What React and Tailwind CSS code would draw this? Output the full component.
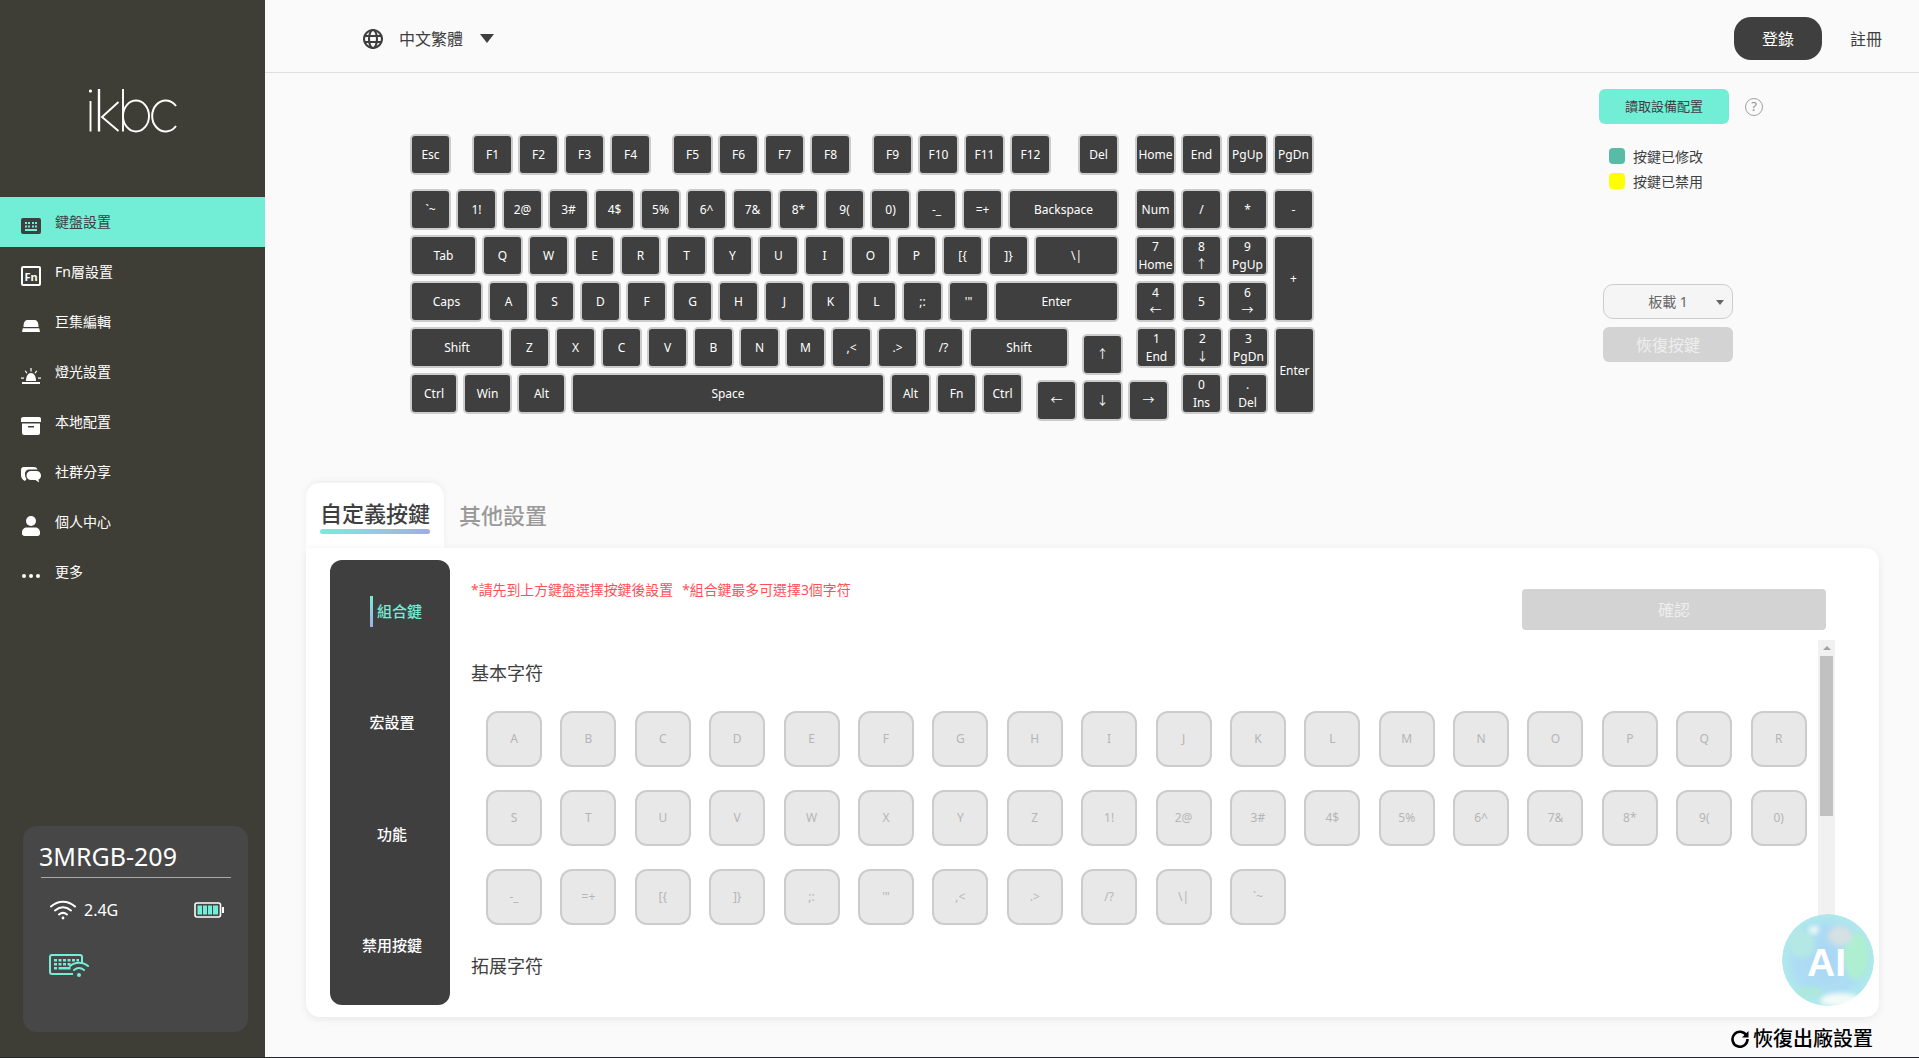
import React from 'react';

const FONT = "font-['Noto_Sans','Noto_Sans_CJK_TC',sans-serif]";

// keyboard layout, every key is 41px unless w says otherwise
const KEY_ROWS = [
  {
    cls: 'mt-px mb-[14px]',
    keys: [
      { t: 'Esc' },
      { t: 'F1', x: 'ml-[16px]' }, { t: 'F2' }, { t: 'F3' }, { t: 'F4' },
      { t: 'F5', x: 'ml-[16px]' }, { t: 'F6' }, { t: 'F7' }, { t: 'F8' },
      { t: 'F9', x: 'ml-[16px]' }, { t: 'F10' }, { t: 'F11' }, { t: 'F12' },
      { t: 'Del', x: 'ml-[22px]' },
      { t: 'Home', x: 'ml-[11px]' }, { t: 'End' }, { t: 'PgUp' }, { t: 'PgDn' },
    ],
  },
  {
    cls: 'mb-[5px]',
    keys: [
      { t: '`~' }, { t: '1!' }, { t: '2@' }, { t: '3#' }, { t: '4$' }, { t: '5%' }, { t: '6^' },
      { t: '7&' }, { t: '8*' }, { t: '9(' }, { t: '0)' }, { t: '-_' }, { t: '=+' },
      { t: 'Backspace', w: 'w-[111px]' },
      { t: 'Num', x: 'ml-[11px]' }, { t: '/' }, { t: '*' }, { t: '-' },
    ],
  },
  {
    cls: 'mb-[5px]',
    keys: [
      { t: 'Tab', w: 'w-[67px]' }, { t: 'Q' }, { t: 'W' }, { t: 'E' }, { t: 'R' }, { t: 'T' }, { t: 'Y' },
      { t: 'U' }, { t: 'I' }, { t: 'O' }, { t: 'P' }, { t: '[{' }, { t: ']}' },
      { t: '\\|', w: 'w-[85px]' },
      { t: ['7', 'Home'], x: 'ml-[11px]' }, { t: ['8', '↑'] }, { t: ['9', 'PgUp'] },
      { t: '+', h: 'h-[87px]' },
    ],
  },
  {
    cls: 'mb-[5px]',
    keys: [
      { t: 'Caps', w: 'w-[73px]' }, { t: 'A' }, { t: 'S' }, { t: 'D' }, { t: 'F' }, { t: 'G' }, { t: 'H' },
      { t: 'J' }, { t: 'K' }, { t: 'L' }, { t: ';:' }, { t: '\'"' },
      { t: 'Enter', w: 'w-[125px]' },
      { t: ['4', '←'], x: 'ml-[11px]' }, { t: '5' }, { t: ['6', '→'] },
    ],
  },
  {
    cls: 'mb-[5px]',
    keys: [
      { t: 'Shift', w: 'w-[94px]' }, { t: 'Z' }, { t: 'X' }, { t: 'C' }, { t: 'V' }, { t: 'B' }, { t: 'N' },
      { t: 'M' }, { t: ',<' }, { t: '.>' }, { t: '/?' },
      { t: 'Shift', w: 'w-[100px]' },
      { t: '↑', x: 'ml-[8px] mt-[7px]' },
      { t: ['1', 'End'], x: 'ml-[8px]' }, { t: ['2', '↓'] }, { t: ['3', 'PgDn'] },
      { t: 'Enter', h: 'h-[87px]' },
    ],
  },
  {
    cls: '',
    keys: [
      { t: 'Ctrl', w: 'w-[48px]' }, { t: 'Win', w: 'w-[49px]' }, { t: 'Alt', w: 'w-[49px]' },
      { t: 'Space', w: 'w-[314px]' },
      { t: 'Alt' }, { t: 'Fn' }, { t: 'Ctrl' },
      { t: '←', x: 'ml-[8px] mt-[7px]' }, { t: '↓', x: 'mt-[7px]' }, { t: '→', x: 'mt-[7px]' },
      { t: ['0', 'Ins'], x: 'ml-[7px]' }, { t: ['.', 'Del'] },
    ],
  },
];

const BASIC_KEYS = [
  'A', 'B', 'C', 'D', 'E', 'F', 'G', 'H', 'I', 'J', 'K', 'L', 'M', 'N', 'O', 'P', 'Q', 'R',
  'S', 'T', 'U', 'V', 'W', 'X', 'Y', 'Z', '1!', '2@', '3#', '4$', '5%', '6^', '7&', '8*', '9(', '0)',
  '-_', '=+', '[{', ']}', ';:', '\'"', ',<', '.>', '/?', '\\|', '`~',
];

const KeyboardIcon = () => (
  <svg width="20" height="16" viewBox="0 0 20 16">
    <rect width="20" height="16" rx="2" fill="#3f3f3f" />
    <g fill="#72eed7">
      <rect x="4" y="4" width="2" height="2" /><rect x="7" y="4" width="2" height="2" /><rect x="11" y="4" width="2" height="2" /><rect x="14" y="4" width="2" height="2" />
      <rect x="4" y="7.5" width="2" height="2" /><rect x="7" y="7.5" width="2" height="2" /><rect x="11" y="7.5" width="2" height="2" /><rect x="14" y="7.5" width="2" height="2" />
      <rect x="4" y="11" width="12" height="2" />
    </g>
  </svg>
);

const FnIcon = () => (
  <span className="flex h-[20px] w-[20px] items-center justify-center rounded-[2px] border-2 border-white text-[11px] font-bold leading-none text-white">Fn</span>
);

const MacroIcon = () => (
  <svg width="18" height="12" viewBox="0 0 18 12" fill="#fff">
    <path d="M1.5 7 C1.5 2 3 0 5.5 0 H12.5 C15 0 16.5 2 16.5 7 Z" />
    <path d="M0.8 8.2 H17.2 L18 12 H0 Z" />
  </svg>
);

const LightIcon = () => (
  <svg width="20" height="16" viewBox="0 0 20 16" fill="#fff">
    <path d="M5 13 C5 8 7 5 10 5 C13 5 15 8 15 13 Z" />
    <rect x="1" y="14" width="18" height="2" />
    <rect x="9.4" y="0" width="1.2" height="3.5" />
    <path d="M3.8 3 L4.8 2.4 L6.4 5 L5.4 5.6 Z M16.2 3 L15.2 2.4 L13.6 5 L14.6 5.6 Z" />
    <rect x="0" y="9.5" width="3" height="1.2" /><rect x="17" y="9.5" width="3" height="1.2" />
  </svg>
);

const ArchiveIcon = () => (
  <svg width="20" height="18" viewBox="0 0 20 18" fill="#fff">
    <path d="M2 0 H18 A2 2 0 0 1 20 2 V5 H0 V2 A2 2 0 0 1 2 0 Z" />
    <path fillRule="evenodd" d="M1 6.5 H19 V16 A2 2 0 0 1 17 18 H3 A2 2 0 0 1 1 16 Z M7 9 V10.5 H13 V9 Z" />
  </svg>
);

const ChatIcon = () => (
  <svg width="20" height="18" viewBox="0 0 20 18" fill="#fff">
    <path d="M3 0 H13 C15 0 16 1 16.5 2.5 H9 C5.5 2.5 4 4.5 4 7 C4 9 4.5 10.5 5.5 12 L4 14 C1.5 13 0 11 0 8 V3 C0 1 1 0 3 0 Z" />
    <path d="M10 4 H15.5 C18 4 20 6 20 8.5 C20 10.5 19 12 17.5 12.5 L18 15.5 L14.5 13 H10 C7.5 13 5.5 11 5.5 8.5 C5.5 6 7.5 4 10 4 Z" />
  </svg>
);

const UserIcon = () => (
  <svg width="18" height="20" viewBox="0 0 18 20" fill="#fff">
    <circle cx="9" cy="5" r="5" />
    <path d="M5 11.5 H13 C16 11.5 18 13.5 18 16.5 V17.5 C18 19 17 20 15.5 20 H2.5 C1 20 0 19 0 17.5 V16.5 C0 13.5 2 11.5 5 11.5 Z" />
  </svg>
);

const DotsIcon = () => (
  <svg width="18" height="4" viewBox="0 0 18 4" fill="#fff">
    <circle cx="2" cy="2" r="2" /><circle cx="9" cy="2" r="2" /><circle cx="16" cy="2" r="2" />
  </svg>
);

const NAV_ITEMS = [
  { label: '鍵盤設置', icon: <KeyboardIcon />, active: true },
  { label: 'Fn層設置', icon: <FnIcon /> },
  { label: '巨集編輯', icon: <MacroIcon /> },
  { label: '燈光設置', icon: <LightIcon /> },
  { label: '本地配置', icon: <ArchiveIcon /> },
  { label: '社群分享', icon: <ChatIcon /> },
  { label: '個人中心', icon: <UserIcon /> },
  { label: '更多', icon: <DotsIcon /> },
];

const Logo = () => (
  <svg width="90" height="46" viewBox="0 0 90 46" fill="none" stroke="#fff" strokeWidth="1.9">
    <circle cx="1.5" cy="3" r="1.6" fill="#fff" stroke="none" />
    <path d="M1.5 13 V43.5" />
    <path d="M10 1 V43.5" strokeWidth="2.4" />
    <path d="M29.5 14 L13 29 L29.5 43" />
    <path d="M34 1 V43.5" />
    <ellipse cx="47" cy="28" rx="13" ry="15.5" />
    <path d="M87 18 A13.5 15.5 0 1 0 87 38" strokeWidth="2" />
  </svg>
);

const Key = ({ k }) => (
  <div className={`flex flex-none flex-col items-center justify-center rounded-[5px] border-2 border-[#cccccc] bg-[#3f3f3f] text-[12px] leading-[18px] text-white whitespace-nowrap ${k.w || 'w-[41px]'} ${k.h || 'h-[41px]'} ${k.x || ''}`}>
    {Array.isArray(k.t) ? k.t.map((line) => <span key={line}>{line}</span>) : k.t}
  </div>
);

const Sidebar = () => (
  <aside className="flex h-full w-[265px] flex-none flex-col bg-[#3f3e36]">
    <div className="flex h-[197px] flex-none justify-center pl-[2px] pt-[88px]">
      <div><Logo /></div>
    </div>
    <nav className="flex flex-col">
      {NAV_ITEMS.map((item) => (
        <div key={item.label} className={`flex h-[50px] items-start ${item.active ? 'bg-[#72eed7] text-[#3f3f3f]' : 'text-white'}`}>
          <span className="ml-[21px] flex h-[50px] w-[20px] flex-none items-center justify-center pt-[8px]">{item.icon}</span>
          <span className="ml-[14px] mt-[15px] text-[14px] leading-[20px]">{item.label}</span>
        </div>
      ))}
    </nav>
    <div className="ml-[23px] mt-[229px] h-[206px] w-[225px] rounded-[14px] bg-[#474747] pl-[16px] pt-[13px] text-white">
      <div className="text-[25px] leading-[34px]">3MRGB-209</div>
      <div className="ml-[2px] mt-[4px] h-px w-[190px] bg-[#aaaaaa]" />
      <div className="mt-[20px] flex h-[24px] items-center pl-[11px]">
        <svg width="26" height="20" viewBox="0 0 26 20" fill="none" stroke="#fff" strokeWidth="2" strokeLinecap="round">
          <path d="M1 6.5 C8 0 18 0 25 6.5" />
          <path d="M5 10.5 C10 6.5 16 6.5 21 10.5" />
          <path d="M9 14.5 C11.5 12.5 14.5 12.5 17 14.5" />
          <circle cx="13" cy="18" r="1.4" fill="#fff" stroke="none" />
        </svg>
        <span className="ml-[8px] text-[16px]">2.4G</span>
        <svg className="ml-[76px]" width="30" height="16" viewBox="0 0 30 16">
          <rect x="1" y="1" width="25.5" height="14" rx="2" fill="none" stroke="#fff" strokeWidth="1.6" />
          <rect x="3.5" y="3.5" width="4.5" height="9" fill="#72eed7" />
          <rect x="9" y="3.5" width="4" height="9" fill="#72eed7" />
          <rect x="14" y="3.5" width="4" height="9" fill="#72eed7" />
          <rect x="19" y="3.5" width="5" height="9" fill="#72eed7" />
          <rect x="28" y="5" width="2" height="6" fill="#fff" />
        </svg>
      </div>
      <svg className="ml-[10px] mt-[32px]" width="40" height="24" viewBox="0 0 40 24" fill="none">
        <path d="M24 20 H3 A2 2 0 0 1 1 18 V3 A2 2 0 0 1 3 1 H31 A2 2 0 0 1 33 3 V9" stroke="#72eed7" strokeWidth="2" />
        <g fill="#72eed7">
          <rect x="5" y="5" width="3" height="2.5" /><rect x="9.5" y="5" width="3" height="2.5" /><rect x="14" y="5" width="3" height="2.5" /><rect x="18.5" y="5" width="3" height="2.5" /><rect x="23" y="5" width="3" height="2.5" /><rect x="27.5" y="5" width="2.5" height="2.5" />
          <rect x="5" y="9" width="3" height="2.5" /><rect x="9.5" y="9" width="3" height="2.5" /><rect x="14" y="9" width="3" height="2.5" /><rect x="18.5" y="9" width="3" height="2.5" />
          <rect x="5" y="13" width="3" height="2.5" /><rect x="9.5" y="13" width="12" height="2.5" />
          <circle cx="30" cy="21" r="2" />
        </g>
        <g stroke="#72eed7" strokeWidth="2" strokeLinecap="round">
          <path d="M21 12 C26 7.5 34 7.5 39 12" />
          <path d="M25 16 C28 13.5 32 13.5 35 16" />
        </g>
      </svg>
    </div>
  </aside>
);

const Header = () => (
  <header className="flex h-[73px] flex-none items-center border-b border-[#e0e0e0] pl-[98px] pr-[37px] pt-[5px] text-[#3f3f3f]">
    <svg width="20" height="20" viewBox="0 0 20 20" fill="none" stroke="#3f3f3f" strokeWidth="2.1">
      <circle cx="10" cy="10" r="9" />
      <ellipse cx="10" cy="10" rx="4" ry="9" />
      <path d="M1.5 7 H18.5 M1.5 13 H18.5" />
    </svg>
    <span className="ml-[16px] text-[16px]">中文繁體</span>
    <span className="ml-[17px] h-0 w-0 border-x-[7px] border-t-[9px] border-x-transparent border-t-[#3f3f3f]" />
    <button className="ml-auto h-[43px] w-[88px] rounded-[17px] bg-[#3f3f3f] text-[16px] text-white">登錄</button>
    <span className="ml-[28px] text-[16px]">註冊</span>
  </header>
);

const KeyboardPanel = () => (
  <div className="flex h-[410px] flex-none pl-[145px] pt-[16px]">
    <div className="mt-[44px] w-[905px] flex-none">
      {KEY_ROWS.map((row, i) => (
        <div key={i} className={`flex h-[41px] gap-[5px] ${row.cls}`}>
          {row.keys.map((k, j) => <Key key={j} k={k} />)}
        </div>
      ))}
    </div>
    <div className="ml-[284px] flex flex-col text-[#3f3f3f]">
      <div className="flex items-center">
        <button className="h-[35px] w-[130px] rounded-[6px] bg-[#72eed7] text-[13px]">讀取設備配置</button>
        <span className="ml-[16px] flex h-[18px] w-[18px] items-center justify-center rounded-full border-[1.5px] border-[#a0a0a0] text-[13px] leading-none text-[#909090]">?</span>
      </div>
      <div className="ml-[10px] mt-[24px] flex h-[16px] items-center gap-[8px] text-[14px]">
        <span className="h-[16px] w-[16px] rounded-[4px] bg-[#58bba8]" />按鍵已修改
      </div>
      <div className="ml-[10px] mt-[9px] flex h-[16px] items-center gap-[8px] text-[14px]">
        <span className="h-[16px] w-[16px] rounded-[4px] bg-[#ffff00]" />按鍵已禁用
      </div>
      <div className="relative ml-[4px] mt-[95px] flex h-[35px] w-[130px] items-center justify-center rounded-[10px] border border-[#cccccc] bg-[#f5f5f5] text-[14px] text-[#666666]">
        板載 1
        <span className="absolute right-[8px] top-[15px] h-0 w-0 border-x-[4px] border-t-[5px] border-x-transparent border-t-[#666666]" />
      </div>
      <button className="ml-[4px] mt-[8px] h-[35px] w-[130px] rounded-[6px] bg-[#d3d3d3] text-[16px] text-[#eeeeee]">恢復按鍵</button>
    </div>
  </div>
);

const AiBall = () => (
  <div className="absolute right-[5px] top-[366px] h-[92px] w-[92px]">
    <svg width="92" height="92" viewBox="0 0 92 92">
      <defs>
        <radialGradient id="ballBase" cx="50%" cy="50%" r="50%">
          <stop offset="0%" stopColor="#a4d4f6" />
          <stop offset="70%" stopColor="#a6daf3" />
          <stop offset="100%" stopColor="#aae8ea" />
        </radialGradient>
        <filter id="soft" x="-30%" y="-30%" width="160%" height="160%"><feGaussianBlur stdDeviation="2.5" /></filter>
        <clipPath id="ballClip"><circle cx="46" cy="46" r="46" /></clipPath>
      </defs>
      <g clipPath="url(#ballClip)" opacity="0.92">
        <circle cx="46" cy="46" r="46" fill="url(#ballBase)" />
        <ellipse cx="74" cy="42" rx="13" ry="24" fill="#a8eecf" filter="url(#soft)" />
        <ellipse cx="58" cy="22" rx="12" ry="10" fill="#d2dfe0" filter="url(#soft)" />
        <ellipse cx="20" cy="30" rx="13" ry="14" fill="#aee6e2" filter="url(#soft)" />
        <ellipse cx="32" cy="16" rx="5" ry="4" fill="#f2faf6" filter="url(#soft)" />
        <ellipse cx="58" cy="86" rx="20" ry="7" fill="#f2fbf8" filter="url(#soft)" />
        <ellipse cx="28" cy="78" rx="14" ry="5" fill="#a6e8d6" filter="url(#soft)" />
      </g>
    </svg>
    <span className="absolute left-[25px] top-[25px] font-['Liberation_Sans',sans-serif] text-[39px] font-bold leading-[48px] text-white">AI</span>
  </div>
);

const Scrollbar = () => (
  <div className="flex h-[344px] w-[17px] flex-none flex-col items-center bg-[#f1f1f1]">
    <span className="mt-[6px] h-0 w-0 border-x-[4px] border-b-[4px] border-x-transparent border-b-[#a3a3a3]" />
    <div className="mt-[6px] h-[160px] w-[13px] bg-[#c1c1c1]" />
  </div>
);

const SettingsCard = () => (
  <>
    <div className="ml-[41px] flex h-[65px] flex-none items-end">
      <div className="flex h-[65px] w-[138px] flex-col items-center rounded-t-[14px] bg-white pt-[14px] shadow-[0_-2px_6px_rgba(0,0,0,0.05)]">
        <span className="text-[22px] font-medium leading-[32px] text-[#3f3f3f]">自定義按鍵</span>
        <span className="h-[5px] w-[110px] rounded-full bg-gradient-to-r from-[#72eed7] to-[#a2abe5]" />
      </div>
      <span className="mb-[17px] ml-[15px] text-[22px] font-medium leading-[32px] text-[#999999]">其他設置</span>
    </div>
    <div className="relative ml-[41px] flex h-[469px] w-[1573px] flex-none rounded-[14px] rounded-tl-none bg-white pl-[24px] pt-[12px] shadow-[0_2px_8px_rgba(0,0,0,0.08)]">
      <div className="flex h-[445px] w-[120px] flex-none flex-col gap-[81.5px] rounded-[12px] bg-[#3f3f3f] pl-[4px] pt-[36px] text-[15px] font-medium text-white">
        <div className="flex h-[30px] items-center justify-center pl-[8px]">
          <span className="mr-[4px] h-[31px] w-[3px] bg-gradient-to-b from-[#72eed7] to-[#a2abe5]" />
          <span className="text-[#72eed7]">組合鍵</span>
        </div>
        <div className="flex h-[30px] items-center justify-center">宏設置</div>
        <div className="flex h-[30px] items-center justify-center">功能</div>
        <div className="flex h-[30px] items-center justify-center">禁用按鍵</div>
      </div>
      <div className="ml-[21px] flex flex-col">
        <div className="flex h-[80px] w-[1355px] flex-none items-start">
          <p className="mt-[20px] text-[13.9px] leading-[20px] text-[#ff5058]">
            *請先到上方鍵盤選擇按鍵後設置<span className="ml-[9px]">*組合鍵最多可選擇3個字符</span>
          </p>
          <button className="ml-auto mt-[29px] h-[41px] w-[304px] rounded-[4px] bg-[#d3d3d3] text-[16px] text-[#eeeeee]">確認</button>
        </div>
        <div className="flex h-[344px] w-[1364px]">
          <div className="min-w-0 flex-1 overflow-hidden pt-[19px]">
            <h3 className="text-[18px] leading-[28px] text-[#3f3f3f]">基本字符</h3>
            <div className="ml-[15px] mt-[24px] grid grid-cols-[repeat(18,74.4px)] gap-y-[23px]">
              {BASIC_KEYS.map((k) => (
                <div key={k} className="flex h-[56px] w-[56px] items-center justify-center rounded-[12px] border-2 border-[#cccccc] bg-[#e8e8e8] text-[12px] text-[#b5b5b5]">{k}</div>
              ))}
            </div>
            <h3 className="mt-[27px] text-[18px] leading-[28px] text-[#3f3f3f]">拓展字符</h3>
          </div>
          <Scrollbar />
        </div>
      </div>
      <AiBall />
    </div>
    <div className="flex h-[40px] flex-none items-center justify-end pr-[46px] pt-[3px] text-black">
      <svg width="18" height="18" viewBox="0 0 18 18" fill="none">
        <path d="M15.5 5.5 A7.5 7.5 0 1 0 16.5 9" stroke="#000" strokeWidth="2.6" />
        <path d="M17.5 1 V7.5 H11 Z" fill="#000" />
      </svg>
      <span className="ml-[4px] text-[20px] font-medium leading-none">恢復出廠設置</span>
    </div>
  </>
);

export default function App() {
  return (
    <div className={`flex h-[1058px] w-full flex-col overflow-hidden bg-[#fafafa] ${FONT}`}>
      <div className="flex h-[1057px] flex-none">
        <Sidebar />
        <main className="flex min-w-0 flex-1 flex-col">
          <Header />
          <KeyboardPanel />
          <SettingsCard />
        </main>
      </div>
      <div className="h-px flex-none bg-[#23262e]" />
    </div>
  );
}
